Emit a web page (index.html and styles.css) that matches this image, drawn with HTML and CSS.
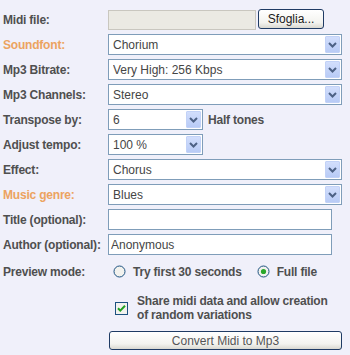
FILE: index.html
```html
<!DOCTYPE html>
<html lang="it">

<head>
    <meta charset="UTF-8">
    <meta name="viewport" content="width=device-width, initial-scale=1.0">
    <title>Midi to Mp3</title>
    <link rel="stylesheet" href="styles.css">
</head>

<body>
    <form class="convert-form">
        <div class="row">
            <label class="label">Midi file:</label>
            <div class="field">
                <span class="file-path"></span>
                <button type="button" class="xp-button browse">Sfoglia...</button>
            </div>
        </div>
        <div class="row">
            <label class="label accent">Soundfont:</label>
            <div class="field">
                <div class="select">
                    <select><option>Chorium</option></select>
                    <span class="arrow"><svg width="9" height="6" viewBox="0 0 9 6"><path d="M1 1l3.5 3.5L8 1" fill="none" stroke="#4d6185" stroke-width="2"/></svg></span>
                </div>
            </div>
        </div>
        <div class="row">
            <label class="label">Mp3 Bitrate:</label>
            <div class="field">
                <div class="select">
                    <select><option>Very High: 256 Kbps</option></select>
                    <span class="arrow"><svg width="9" height="6" viewBox="0 0 9 6"><path d="M1 1l3.5 3.5L8 1" fill="none" stroke="#4d6185" stroke-width="2"/></svg></span>
                </div>
            </div>
        </div>
        <div class="row">
            <label class="label">Mp3 Channels:</label>
            <div class="field">
                <div class="select">
                    <select><option>Stereo</option></select>
                    <span class="arrow"><svg width="9" height="6" viewBox="0 0 9 6"><path d="M1 1l3.5 3.5L8 1" fill="none" stroke="#4d6185" stroke-width="2"/></svg></span>
                </div>
            </div>
        </div>
        <div class="row">
            <label class="label">Transpose by:</label>
            <div class="field">
                <div class="select short">
                    <select><option>6</option></select>
                    <span class="arrow"><svg width="9" height="6" viewBox="0 0 9 6"><path d="M1 1l3.5 3.5L8 1" fill="none" stroke="#4d6185" stroke-width="2"/></svg></span>
                </div>
                <span class="note">Half tones</span>
            </div>
        </div>
        <div class="row">
            <label class="label">Adjust tempo:</label>
            <div class="field">
                <div class="select short">
                    <select><option>100 %</option></select>
                    <span class="arrow"><svg width="9" height="6" viewBox="0 0 9 6"><path d="M1 1l3.5 3.5L8 1" fill="none" stroke="#4d6185" stroke-width="2"/></svg></span>
                </div>
            </div>
        </div>
        <div class="row">
            <label class="label">Effect:</label>
            <div class="field">
                <div class="select">
                    <select><option>Chorus</option></select>
                    <span class="arrow"><svg width="9" height="6" viewBox="0 0 9 6"><path d="M1 1l3.5 3.5L8 1" fill="none" stroke="#4d6185" stroke-width="2"/></svg></span>
                </div>
            </div>
        </div>
        <div class="row">
            <label class="label accent">Music genre:</label>
            <div class="field">
                <div class="select">
                    <select><option>Blues</option></select>
                    <span class="arrow"><svg width="9" height="6" viewBox="0 0 9 6"><path d="M1 1l3.5 3.5L8 1" fill="none" stroke="#4d6185" stroke-width="2"/></svg></span>
                </div>
            </div>
        </div>
        <div class="row">
            <label class="label">Title (optional):</label>
            <div class="field">
                <input type="text" class="text-input">
            </div>
        </div>
        <div class="row">
            <label class="label">Author (optional):</label>
            <div class="field">
                <input type="text" class="text-input" value="Anonymous">
            </div>
        </div>
        <div class="row preview-row">
            <label class="label">Preview mode:</label>
            <div class="field">
                <span class="choice first-choice">
                    <svg class="radio" width="13" height="13" viewBox="0 0 13 13"><circle cx="6.5" cy="6.5" r="5.5" fill="#f2f2ee" stroke="#1c5180"/></svg>
                    Try first 30 seconds
                </span>
                <span class="choice">
                    <svg class="radio" width="13" height="13" viewBox="0 0 13 13"><circle cx="6.5" cy="6.5" r="5.5" fill="#f2f2ee" stroke="#1c5180"/><circle cx="6.5" cy="6.5" r="2.6" fill="#2aa82a"/></svg>
                    Full file
                </span>
            </div>
        </div>
        <div class="share-row">
            <svg class="checkbox" width="13" height="13" viewBox="0 0 13 13"><rect x="0.5" y="0.5" width="12" height="12" fill="#f2f2ee" stroke="#1c5180"/><path d="M3 6.2l2.3 2.4L10 3.8" fill="none" stroke="#21a121" stroke-width="2"/></svg>
            <span class="share-text">Share midi data and allow creation<br>of random variations</span>
        </div>
        <div class="submit-row">
            <button type="button" class="xp-button convert">Convert Midi to Mp3</button>
        </div>
    </form>
</body>

</html>
```

FILE: styles.css
```css
body {
    margin: 0;
    padding: 0;
    background-color: #f0f0fa;
    font-family: "Liberation Sans", Arial, sans-serif;
    font-size: 12px;
    color: #4f4f4f;
}

.convert-form {
    padding: 9px 0 0 3px;
}

.row {
    display: grid;
    grid-template-columns: 105px auto;
    align-items: center;
    height: 21px;
    margin-bottom: 4px;
}

.label {
    font-weight: bold;
    letter-spacing: -0.2px;
}

.label.accent {
    color: #eca360;
}

.field {
    display: flex;
    align-items: center;
}

/* File picker */
.file-path {
    box-sizing: border-box;
    width: 148px;
    height: 20px;
    background-color: #ebeae3;
    border: 1px solid #c9c7bf;
}

.xp-button {
    font-family: inherit;
    font-size: 12px;
    border: 1px solid #1f3b64;
    border-radius: 3px;
    background: linear-gradient(#ffffff, #f3f3ef 70%, #d9d8d0);
    cursor: pointer;
    padding: 0;
}

.browse {
    width: 66px;
    height: 20px;
    margin-left: 2px;
    margin-top: -1px;
    color: #1a1a1a;
}

/* Dropdowns */
.select {
    display: flex;
    box-sizing: border-box;
    width: 234px;
    height: 21px;
    border: 1px solid #7f9db9;
    background-color: #fff;
    padding: 1px;
}

.select.short {
    width: 95px;
}

.select select {
    flex: 1;
    min-width: 0;
    appearance: none;
    -webkit-appearance: none;
    border: none;
    background: transparent;
    font-family: inherit;
    font-size: 12px;
    color: #454545;
    padding: 0 0 0 3px;
    outline: none;
}

.arrow {
    flex: none;
    box-sizing: border-box;
    width: 15px;
    display: flex;
    align-items: center;
    justify-content: center;
    background: linear-gradient(#d2defc, #b8cbf6);
    border: 1px solid #c2d2f7;
    border-radius: 1px;
}

.note {
    margin-left: 5px;
    font-weight: bold;
    letter-spacing: -0.2px;
}

/* Text fields */
.text-input {
    box-sizing: border-box;
    width: 224px;
    height: 21px;
    border: 1px solid #7f9db9;
    background-color: #fff;
    padding: 0 2px;
    font-family: inherit;
    font-size: 12px;
    color: #454545;
    outline: none;
}

/* Preview choices */
.preview-row {
    height: 25px;
    margin-bottom: 0;
}

.choice {
    display: flex;
    align-items: center;
    font-weight: bold;
    letter-spacing: -0.2px;
}

.choice .radio {
    margin-right: 7px;
}

.first-choice {
    margin-left: 5px;
    margin-right: 15px;
}

/* Share checkbox */
.share-row {
    display: flex;
    align-items: center;
    padding: 10px 0 0 112px;
}

.checkbox {
    flex: none;
    margin-right: 9px;
}

.share-text {
    font-weight: bold;
    letter-spacing: -0.2px;
    line-height: 14px;
}

.submit-row {
    padding: 9px 0 0 106px;
}

.convert {
    width: 233px;
    height: 19px;
    color: #555;
}
```
